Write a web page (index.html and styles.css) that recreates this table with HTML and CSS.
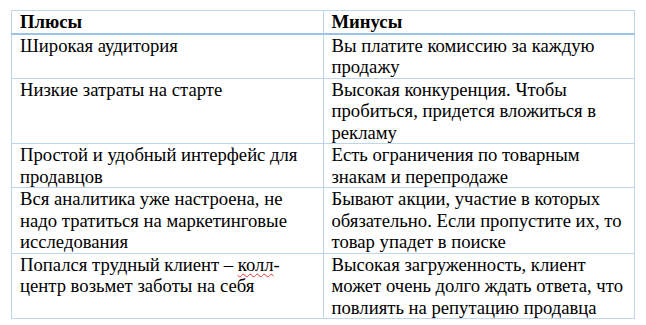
FILE: index.html
```html
<!DOCTYPE html>
<html>
<head>
<meta charset="utf-8">
<title>Плюсы и минусы</title>
<link rel="stylesheet" href="styles.css">
</head>
<body>
<table class="pros-cons">
  <thead>
    <tr>
      <th>Плюсы</th>
      <th>Минусы</th>
    </tr>
  </thead>
  <tbody>
    <tr>
      <td>Широкая аудитория</td>
      <td>Вы платите комиссию за каждую продажу</td>
    </tr>
    <tr>
      <td>Низкие затраты на старте</td>
      <td>Высокая конкуренция. Чтобы пробиться, придется вложиться в рекламу</td>
    </tr>
    <tr>
      <td>Простой и удобный интерфейс для продавцов</td>
      <td>Есть ограничения по товарным знакам и перепродаже</td>
    </tr>
    <tr>
      <td>Вся аналитика уже настроена, не надо тратиться на маркетинговые исследования</td>
      <td>Бывают акции, участие в которых обязательно. Если пропустите их, то товар упадет в поиске</td>
    </tr>
    <tr>
      <td>Попался трудный клиент – <span class="typo">колл</span>-<wbr>центр возьмет заботы на себя</td>
      <td>Высокая загруженность, клиент может очень долго ждать ответа, что повлиять на репутацию продавца</td>
    </tr>
  </tbody>
</table>
</body>
</html>
```
FILE: styles.css
```css
body {
  margin: 0;
  padding: 10px 0 0 11px;
  font-family: "Times New Roman", serif;
  font-size: 18.67px;
  line-height: 21.5px;
  color: #000000;
}

.pros-cons {
  width: 624px;
  border-collapse: collapse;
  table-layout: fixed;
  font-family: "Times New Roman", serif;
}

.pros-cons th,
.pros-cons td {
  width: 50%;
  border: 1px solid #bdd6ee;
  padding: 0 7px 0 8px;
  text-align: left;
  vertical-align: top;
  font-family: "Times New Roman", serif;
  font-weight: normal;
}

.pros-cons th {
  font-weight: bold;
  border-bottom: 2px solid #9cc2e5;
}

.typo {
  text-decoration: underline wavy #e03030;
  text-decoration-thickness: 1px;
  text-underline-offset: 2px;
}
```
